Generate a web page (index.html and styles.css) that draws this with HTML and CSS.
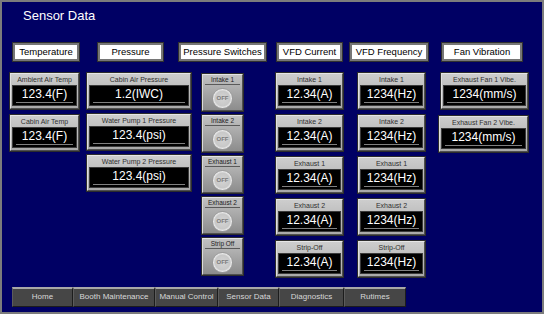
FILE: index.html
```html
<!DOCTYPE html>
<html>
<head>
<meta charset="utf-8">
<link rel="stylesheet" href="styles.css">
</head>
<body>
<div class="screen">
  <div class="title">Sensor Data</div>

  <div class="heads">
    <div class="head h1">Temperature</div>
    <div class="head h2">Pressure</div>
    <div class="head h3">Pressure Switches</div>
    <div class="head h4">VFD Current</div>
    <div class="head h5">VFD Frequency</div>
    <div class="head h6">Fan Vibration</div>
  </div>

  <div class="body">
    <div class="col c1">
      <div class="gauge"><div class="lbl">Ambient Air Temp</div><div class="disp"><div class="val">123.4(F)</div></div></div>
      <div class="gauge"><div class="lbl">Cabin Air Temp</div><div class="disp"><div class="val">123.4(F)</div></div></div>
    </div>
    <div class="col c2">
      <div class="gauge"><div class="lbl">Cabin Air Pressure</div><div class="disp"><div class="val">1.2(IWC)</div></div></div>
      <div class="gauge"><div class="lbl">Water Pump 1 Pressure</div><div class="disp"><div class="val">123.4(psi)</div></div></div>
      <div class="gauge"><div class="lbl">Water Pump 2 Pressure</div><div class="disp"><div class="val">123.4(psi)</div></div></div>
    </div>
    <div class="col c3">
      <div class="sw"><div class="swl">Intake 1</div><div class="knob">OFF</div></div>
      <div class="sw"><div class="swl">Intake 2</div><div class="knob">OFF</div></div>
      <div class="sw"><div class="swl">Exhaust 1</div><div class="knob">OFF</div></div>
      <div class="sw"><div class="swl">Exhaust 2</div><div class="knob">OFF</div></div>
      <div class="sw"><div class="swl">Strip Off</div><div class="knob">OFF</div></div>
    </div>
    <div class="col c4">
      <div class="gauge"><div class="lbl">Intake 1</div><div class="disp"><div class="val">12.34(A)</div></div></div>
      <div class="gauge"><div class="lbl">Intake 2</div><div class="disp"><div class="val">12.34(A)</div></div></div>
      <div class="gauge"><div class="lbl">Exhaust 1</div><div class="disp"><div class="val">12.34(A)</div></div></div>
      <div class="gauge"><div class="lbl">Exhaust 2</div><div class="disp"><div class="val">12.34(A)</div></div></div>
      <div class="gauge"><div class="lbl">Strip-Off</div><div class="disp"><div class="val">12.34(A)</div></div></div>
    </div>
    <div class="col c5">
      <div class="gauge"><div class="lbl">Intake 1</div><div class="disp"><div class="val">1234(Hz)</div></div></div>
      <div class="gauge"><div class="lbl">Intake 2</div><div class="disp"><div class="val">1234(Hz)</div></div></div>
      <div class="gauge"><div class="lbl">Exhaust 1</div><div class="disp"><div class="val">1234(Hz)</div></div></div>
      <div class="gauge"><div class="lbl">Exhaust 2</div><div class="disp"><div class="val">1234(Hz)</div></div></div>
      <div class="gauge"><div class="lbl">Strip-Off</div><div class="disp"><div class="val">1234(Hz)</div></div></div>
    </div>
    <div class="col c6">
      <div class="gauge"><div class="lbl">Exhaust Fan 1 Vibe.</div><div class="disp"><div class="val">1234(mm/s)</div></div></div>
      <div class="gauge shift"><div class="lbl">Exhaust Fan 2 Vibe.</div><div class="disp"><div class="val">1234(mm/s)</div></div></div>
    </div>
  </div>

  <div class="nav">
    <div class="btn b1">Home</div>
    <div class="btn b2">Booth Maintenance</div>
    <div class="btn b3">Manual Control</div>
    <div class="btn b4">Sensor Data</div>
    <div class="btn b5">Diagnostics</div>
    <div class="btn b6">Rutimes</div>
  </div>
</div>
</body>
</html>
```

FILE: styles.css
```css
* { box-sizing: border-box; }
html, body { margin: 0; padding: 0; }
body { font-family: "Liberation Sans", Arial, sans-serif; background: #000064; }

.screen {
  width: 544px;
  height: 314px;
  background: #000064;
  border: 2px solid #7c7c7c;
  display: flex;
  flex-direction: column;
}

.title {
  color: #ffffff;
  font-size: 13px;
  line-height: 15px;
  margin: 6px 0 0 21px;
}

.heads {
  display: flex;
  margin-top: 20px;
  height: 18px;
}
.head {
  height: 18px;
  background: #ffffff;
  border: 2px solid #767676;
  box-shadow: 0 0 0 1px #303030;
  color: #000;
  font-size: 9.5px;
  line-height: 14px;
  text-align: center;
  white-space: nowrap;
}
.h1 { width: 66px; margin-left: 11px; }
.h2 { width: 65px; margin-left: 19px; }
.h3 { width: 87px; margin-left: 16px; }
.h4 { width: 65px; margin-left: 11px; }
.h5 { width: 78px; margin-left: 8px; }
.h6 { width: 80px; margin-left: 14px; }

.body {
  display: flex;
  align-items: flex-start;
  margin-top: 12px;
}
.col { display: flex; flex-direction: column; }
.c1 { width: 69px; margin-left: 8px; gap: 6px; }
.c2 { width: 104px; margin-left: 8px; gap: 5px; }
.c3 { width: 41px; margin-left: 11px; gap: 4px; padding-top: 1px; }
.c4 { width: 67px; margin-left: 33px; gap: 6px; }
.c5 { width: 67px; margin-left: 15px; gap: 6px; }
.c6 { width: 87px; margin-left: 16px; gap: 7px; }
.shift { margin-left: -2px; }

.gauge {
  height: 36px;
  background: linear-gradient(#cdcdcd, #a9a9a9);
  border: 1px solid;
  border-color: #e6e6e6 #505050 #505050 #e0e0e0;
  box-shadow: 0 0 0 1px #2c2c2c;
  padding: 0 1px 2px 1px;
  display: flex;
  flex-direction: column;
}
.lbl {
  height: 11px;
  font-size: 7px;
  line-height: 11px;
  color: #303030;
  text-align: center;
  white-space: nowrap;
}
.disp {
  flex: 1;
  background: #000;
  border: 1px solid #3a3a3a;
  padding: 0 3px 2px 3px;
  display: flex;
}
.val {
  flex: 1;
  color: #ffffff;
  font-size: 12px;
  line-height: 16px;
  text-align: center;
  border-bottom: 1px solid #808080;
  white-space: nowrap;
}

.sw {
  width: 41px;
  height: 37px;
  background: linear-gradient(#c2c2c2, #8c8c8c);
  border: 1px solid;
  border-color: #e4e4e4 #505050 #505050 #dcdcdc;
  box-shadow: 0 0 0 1px #2c2c2c;
  display: flex;
  flex-direction: column;
  align-items: center;
}
.swl {
  width: 35px;
  height: 10px;
  font-size: 6.5px;
  line-height: 9px;
  color: #222;
  text-align: center;
  white-space: nowrap;
  border-bottom: 1px solid #5a5a5a;
}
.knob {
  width: 21px;
  height: 21px;
  margin-top: 3px;
  border-radius: 50%;
  background: radial-gradient(circle, #d4d4d4 0%, #c8c8c8 55%, #f0f0f0 70%, #dedede 100%);
  border: 1px solid #9a9a9a;
  color: #7a7a7a;
  font-size: 6px;
  font-weight: bold;
  line-height: 19px;
  text-align: center;
}

.nav {
  display: flex;
  margin-top: auto;
  margin-bottom: 5px;
  padding-left: 10px;
}
.btn {
  height: 20px;
  background: #464646;
  border: 1px solid;
  border-color: #a8a8a8 #1c1c1c #1c1c1c #5c5c5c;
  border-top-width: 2px;
  color: #d8d8d8;
  font-size: 8px;
  line-height: 16px;
  text-align: center;
  white-space: nowrap;
}
.b1 { width: 61px; }
.b2 { width: 82px; }
.b3 { width: 63px; }
.b4 { width: 61px; }
.b5 { width: 65px; }
.b6 { width: 62px; }
```
